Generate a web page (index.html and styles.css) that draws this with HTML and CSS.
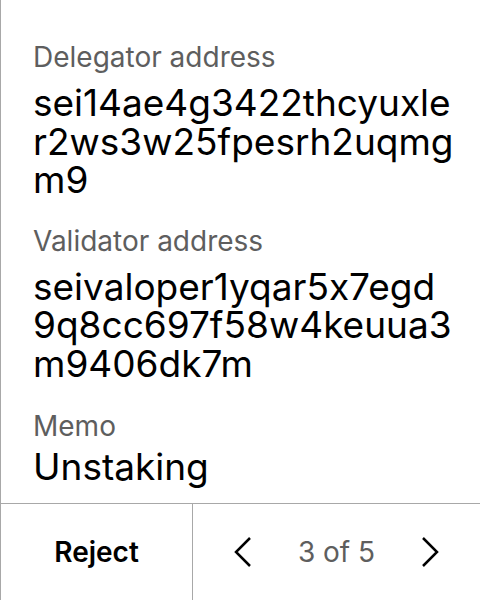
FILE: index.html
```html
<!DOCTYPE html>
<html>
<head>
<meta charset="utf-8">
<link rel="stylesheet" href="styles.css">
</head>
<body>
<div class="screen">
  <div class="content">
    <div class="field">
      <div class="label">Delegator address</div>
      <div class="value">sei14ae4g3422thcyuxler2ws3w25fpesrh2uqmgm9</div>
    </div>
    <div class="field">
      <div class="label">Validator address</div>
      <div class="value">seivaloper1yqar5x7egd9q8cc697f58w4keuua3m9406dk7m</div>
    </div>
    <div class="field memo">
      <div class="label">Memo</div>
      <div class="value">Unstaking</div>
    </div>
  </div>
  <div class="footer">
    <div class="reject">Reject</div>
    <div class="pager">
      <svg class="chev" width="20" height="32" viewBox="0 0 20 32"><path d="M17 2 L3 16 L17 30" fill="none" stroke="#000" stroke-width="2.5"/></svg>
      <span class="count">3 of 5</span>
      <svg class="chev" width="20" height="32" viewBox="0 0 20 32"><path d="M3 2 L17 16 L3 30" fill="none" stroke="#000" stroke-width="2.5"/></svg>
    </div>
  </div>
</div>
</body>
</html>
```
FILE: styles.css
```css
html, body {
  margin: 0;
  padding: 0;
  background: #fff;
}
body {
  font-family: Inter, "Noto Sans", sans-serif;
  font-feature-settings: "calt" 0;
}
.screen {
  width: 480px;
  height: 600px;
  box-sizing: border-box;
  border-left: 1px solid #a8a8a8;
  display: flex;
  flex-direction: column;
}
.content {
  flex: 1;
  padding: 43px 25px 0 32px;
  display: flex;
  flex-direction: column;
  gap: 27px;
}
.field {
  display: flex;
  flex-direction: column;
  gap: 12px;
}
.field.memo {
  margin-top: 2px;
  gap: 7px;
}
.label {
  font-size: 28px;
  line-height: 29px;
  color: #5e5e5e;
}
.value {
  font-size: 37px;
  line-height: 38.5px;
  color: #000;
  word-break: break-all;
}
.footer {
  height: 96px;
  flex: none;
  border-top: 1px solid #a8a8a8;
  display: flex;
}
.reject {
  width: 191px;
  border-right: 1px solid #a8a8a8;
  display: flex;
  align-items: center;
  justify-content: center;
  font-size: 28px;
  font-weight: 600;
  color: #000;
}
.pager {
  flex: 1;
  display: flex;
  align-items: center;
  justify-content: space-between;
  padding: 0 40px;
}
.count {
  font-size: 28px;
  color: #5e5e5e;
}
.chev {
  display: block;
}
```
